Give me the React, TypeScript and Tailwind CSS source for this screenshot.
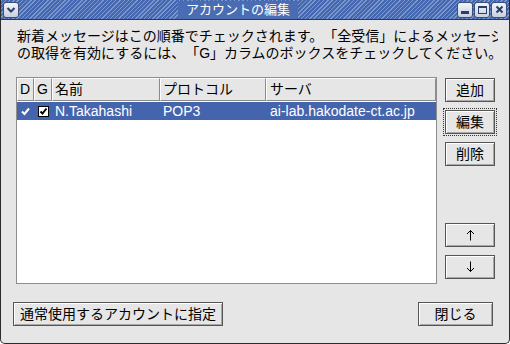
import React from "react";

function TitleButton({ children }: { children: React.ReactNode }) {
  return (
    <div className="w-[16px] h-[16px] rounded-[3px] border border-[#3a4f7a] bg-[linear-gradient(#f2f4f8,#c9d0de)] flex items-center justify-center">
      {children}
    </div>
  );
}

function Button({
  label,
  className = "",
  focused = false,
}: {
  label: React.ReactNode;
  className?: string;
  focused?: boolean;
}) {
  return (
    <div
      className={`h-[24px] flex items-center justify-center ${
        focused ? "outline outline-1 outline-dotted outline-[#333] outline-offset-[1px]" : ""
      } ${className}`}
    >
      <div className="w-full h-full border border-[#555] bg-[#e6e6e6] shadow-[inset_1px_1px_0_#ffffff,inset_-1px_-1px_0_#a8a8a8] flex items-center justify-center text-[14px] text-black leading-none">
        {label}
      </div>
    </div>
  );
}

function Arrow({ up }: { up: boolean }) {
  return (
    <svg width="9" height="12" viewBox="0 0 9 12" className={up ? "" : "rotate-180"}>
      <path d="M4.5 1.5 V11.5 M1 5 L4.5 1.5 L8 5" stroke="#000" strokeWidth="1" fill="none" />
    </svg>
  );
}

function HeaderCell({ label, className = "" }: { label: string; className?: string }) {
  return (
    <div
      className={`h-full border-t border-l border-t-white border-l-white border-r border-b border-r-[#8a8a8a] border-b-[#8a8a8a] flex items-center pl-[2px] ${className}`}
    >
      {label}
    </div>
  );
}

export default function App() {
  return (
    <div className="w-[510px] h-[344px] bg-[#e6e6e6] flex flex-col border-x border-b border-[#2b2b2b] rounded-b-[5px] overflow-hidden font-['Liberation_Sans','Noto_Sans_CJK_JP',sans-serif] text-black [text-spacing-trim:space-all]">
      {/* Title bar */}
      <div className="h-[20px] shrink-0 border-b border-[#233a66] bg-[repeating-linear-gradient(135deg,#7b97cf_0px,#7b97cf_1px,#4668b0_1px,#4668b0_3px)] flex items-center px-[2px] relative">
        <TitleButton>
          <svg width="10" height="8" viewBox="0 0 10 8">
            <path d="M1.5 2 L5 5.5 L8.5 2" stroke="#27406e" strokeWidth="2" fill="none" />
          </svg>
        </TitleButton>
        <div className="flex-1 flex justify-center">
          <span className="bg-[#4a6cb2] px-[8px] text-white text-[13px] leading-[18px]">
            アカウントの編集
          </span>
        </div>
        <div className="flex gap-[1px]">
          <TitleButton>
            <div className="w-[8px] h-[3px] bg-[#27406e] mt-[5px]" />
          </TitleButton>
          <TitleButton>
            <div className="w-[9px] h-[8px] border border-[#27406e] border-t-2" />
          </TitleButton>
          <TitleButton>
            <svg width="9" height="9" viewBox="0 0 9 9">
              <path d="M1.5 1.5 L7.5 7.5 M7.5 1.5 L1.5 7.5" stroke="#27406e" strokeWidth="2" />
            </svg>
          </TitleButton>
        </div>
      </div>

      {/* Description */}
      <div className="pl-[16px] pt-[8px] text-[14px] leading-[17px] whitespace-nowrap overflow-hidden w-[497px]">
        <div>新着メッセージはこの順番でチェックされます。「全受信」によるメッセージ</div>
        <div>の取得を有効にするには、「G」カラムのボックスをチェックしてください。</div>
      </div>

      {/* List + side buttons */}
      <div className="flex mt-[15px] pl-[15px]">
        <div className="w-[421px] h-[207px] border border-[#8d8d8d] bg-white flex flex-col text-[14px]">
          <div className="h-[23px] flex bg-[#e6e6e6]">
            <HeaderCell label="D" className="w-[17px]" />
            <HeaderCell label="G" className="w-[18px]" />
            <HeaderCell label="名前" className="w-[108px]" />
            <HeaderCell label="プロトコル" className="w-[106px]" />
            <HeaderCell label="サーバ" className="flex-1 pl-[3px]" />
          </div>
          <div className="h-[18px] mt-[1px] bg-[#4465ad] text-white flex items-center">
            <div className="w-[17px] flex justify-center">
              <svg width="9" height="9" viewBox="0 0 9 9">
                <path d="M1 4.5 L3.5 7 L8 1.5" stroke="#fff" strokeWidth="2" fill="none" />
              </svg>
            </div>
            <div className="w-[18px] flex justify-center">
              <div className="w-[11px] h-[11px] bg-white border border-black flex items-center justify-center">
                <svg width="9" height="9" viewBox="0 0 9 9">
                  <path d="M1.5 4.5 L3.5 6.5 L7.5 1.5" stroke="#000" strokeWidth="2" fill="none" />
                </svg>
              </div>
            </div>
            <div className="w-[108px] pl-[3px]">N.Takahashi</div>
            <div className="w-[106px] pl-[3px]">POP3</div>
            <div className="flex-1 pl-[4px]">ai-lab.hakodate-ct.ac.jp</div>
          </div>
        </div>

        <div className="ml-[8px] pt-[1px] flex flex-col w-[50px]">
          <Button label="追加" />
          <Button label="編集" focused className="mt-[8px]" />
          <Button label="削除" className="mt-[8px]" />
          <Button label={<Arrow up />} className="mt-[57px]" />
          <Button label={<Arrow up={false} />} className="mt-[8px]" />
        </div>
      </div>

      {/* Bottom buttons */}
      <div className="flex justify-between mt-[18px] pl-[12px] pr-[16px]">
        <Button label="通常使用するアカウントに指定" className="w-[210px]" />
        <Button label="閉じる" className="w-[75px]" />
      </div>
    </div>
  );
}
